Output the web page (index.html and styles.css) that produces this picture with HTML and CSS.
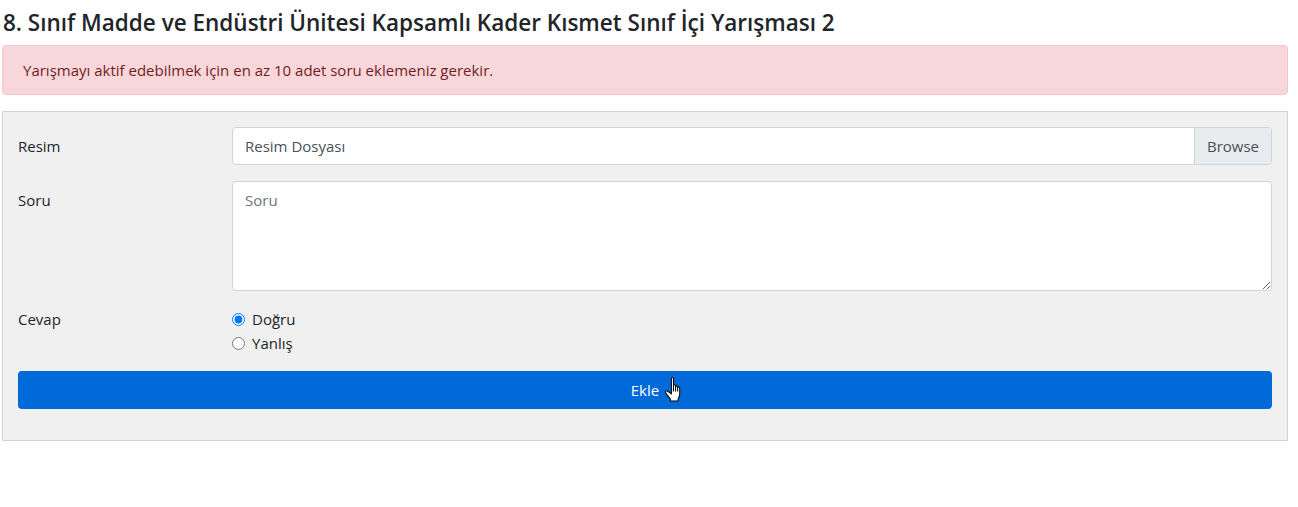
FILE: index.html
```html
<!DOCTYPE html>
<html lang="tr">
<head>
<meta charset="utf-8">
<title>Yarışma</title>
<link rel="stylesheet" href="styles.css">
</head>
<body>
<div class="page">
  <h4 class="title">8. Sınıf Madde ve Endüstri Ünitesi Kapsamlı Kader Kısmet Sınıf İçi Yarışması 2</h4>
  <div class="alert">Yarışmayı aktif edebilmek için en az 10 adet soru eklemeniz gerekir.</div>
  <form class="panel">
    <div class="row">
      <label class="lbl">Resim</label>
      <div class="file">
        <span class="file-name">Resim Dosyası</span>
        <span class="file-btn">Browse</span>
      </div>
    </div>
    <div class="row">
      <label class="lbl">Soru</label>
      <textarea class="area" placeholder="Soru"></textarea>
    </div>
    <div class="row">
      <label class="lbl lbl-flat">Cevap</label>
      <div class="radios">
        <label class="radio"><input type="radio" name="cevap" checked> Doğru</label>
        <label class="radio"><input type="radio" name="cevap"> Yanlış</label>
      </div>
    </div>
    <div class="btn-wrap">
      <button type="button" class="btn">Ekle</button>
      <svg class="cursor" width="20" height="25" viewBox="0 0 18 24">
        <path d="M6.5 1.5 C6.5 0.9 6.9 0.5 7.5 0.5 C8.1 0.5 8.5 0.9 8.5 1.5 L8.5 8.5 C8.5 7.9 8.9 7.5 9.5 7.5 C10.1 7.5 10.5 7.9 10.5 8.5 L10.5 9.5 C10.5 8.9 10.9 8.5 11.5 8.5 C12.1 8.5 12.5 8.9 12.5 9.5 L12.5 10.5 C12.5 9.900 12.9 9.5 13.5 9.5 C14.1 9.5 14.5 9.9 14.5 10.5 L14.5 16.5 C14.5 18.5 13.8 19.8 13 20.8 L13 23 L5.5 23 L5.5 21 C4.5 20 1.8 16.5 1 14.8 C0.6 13.8 1.4 12.6 2.6 13.4 L6.5 16 Z" fill="#fff" stroke="#000" stroke-width="1"/>
        <path d="M8.5 8.5 V14 M10.5 9.5 V14 M12.5 10.5 V14" stroke="#000" stroke-width="1" fill="none"/>
      </svg>
    </div>
  </form>
</div>
</body>
</html>
```

FILE: styles.css
```css
* { box-sizing: border-box; }
html, body { margin: 0; padding: 0; background: #fff; }
body {
  font-family: "Open Sans", "Noto Sans", sans-serif;
  font-size: 15px;
  line-height: 24px;
  color: #212529;
}
.page {
  width: 1286px;
  margin-left: 2px;
}
.title {
  margin: 8px 0 8px 1px;
  font-size: 22.5px;
  font-weight: 600;
  line-height: 29px;
  color: #212529;
}
.alert {
  background: #f8d7da;
  border: 1px solid #f5c6cb;
  color: #721c24;
  border-radius: 4px;
  padding: 12px 20px;
  margin-bottom: 16px;
}
.panel {
  background: #f0f0f0;
  border: 1px solid #d2d2d2;
  padding: 15px;
  margin: 0;
}
.row {
  display: grid;
  grid-template-columns: 214px 1fr;
  margin-bottom: 16px;
}
.lbl { padding-top: 7px; }
.lbl-flat { padding-top: 0; }
.file {
  display: flex;
  height: 38px;
  background: #fff;
  border: 1px solid #ced4da;
  border-radius: 4px;
  overflow: hidden;
}
.file-name {
  flex: 1;
  padding: 6px 12px;
  color: #495057;
}
.file-btn {
  width: 77px;
  padding: 6px 12px;
  background: #e9ecef;
  border-left: 1px solid #ced4da;
  color: #495057;
}
.area {
  display: block;
  width: 100%;
  height: 110px;
  border: 1px solid #ced4da;
  border-radius: 4px;
  padding: 6px 12px;
  font: inherit;
  color: #495057;
  background: #fff;
  resize: vertical;
}
.area::placeholder { color: #6c757d; }
.radios { display: flex; flex-direction: column; }
.radio {
  display: flex;
  align-items: center;
  gap: 7px;
  height: 24px;
}
.radio input {
  margin: 0;
  width: 13px;
  height: 13px;
}
.btn-wrap {
  position: relative;
  margin-bottom: 16px;
}
.btn {
  display: block;
  width: 100%;
  height: 38px;
  border: 0;
  border-radius: 4px;
  background: #006ad9;
  color: #fff;
  font: inherit;
  cursor: pointer;
}
.cursor {
  position: absolute;
  left: 646px;
  top: 6px;
}
```
